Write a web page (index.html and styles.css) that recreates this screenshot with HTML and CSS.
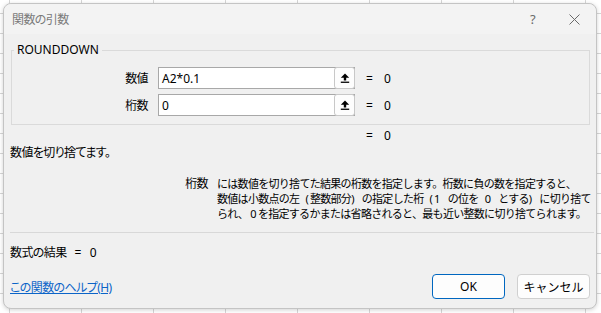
FILE: index.html
```html
<!DOCTYPE html>
<html lang="ja">
<head>
    <meta charset="UTF-8">
    <title>関数の引数</title>
    <link rel="stylesheet" href="styles.css">
</head>
<body>
    <div class="dialog">
        <div class="titlebar">
            <span class="title">関数の引数</span>
            <span class="help">?</span>
            <span class="close">
                <svg width="11" height="11" viewBox="0 0 11 11"><path d="M0.5 0.5 L10.5 10.5 M10.5 0.5 L0.5 10.5" stroke="#6a6a6a" stroke-width="1" fill="none"/></svg>
            </span>
        </div>

        <div class="content">
            <fieldset class="args">
                <legend>ROUNDDOWN</legend>
                <div class="arg-row">
                    <label>数値</label>
                    <div class="ref-box">
                        <span class="ref-value">A2*0.1</span>
                        <span class="ref-btn">
                            <svg width="10" height="10" viewBox="0 0 10 10"><path d="M5 0.5 L0.8 4.7 H3.8 V7.4 H6.2 V4.7 H9.2 Z" fill="#000"/><rect x="0.8" y="8.6" width="8.4" height="1.3" fill="#000"/></svg>
                        </span>
                    </div>
                    <span class="eq">=</span>
                    <span class="res">0</span>
                </div>
                <div class="arg-row">
                    <label>桁数</label>
                    <div class="ref-box">
                        <span class="ref-value">0</span>
                        <span class="ref-btn">
                            <svg width="10" height="10" viewBox="0 0 10 10"><path d="M5 0.5 L0.8 4.7 H3.8 V7.4 H6.2 V4.7 H9.2 Z" fill="#000"/><rect x="0.8" y="8.6" width="8.4" height="1.3" fill="#000"/></svg>
                        </span>
                    </div>
                    <span class="eq">=</span>
                    <span class="res">0</span>
                </div>
            </fieldset>

            <div class="total-row">
                <span class="eq">=</span>
                <span class="res">0</span>
            </div>

            <p class="summary">数値を切り捨てます。</p>

            <div class="arg-help">
                <span class="arg-name">桁数</span>
                <p class="arg-text">には数値を切り捨てた結果の桁数を指定します。桁数に負の数を指定すると、<br>数値は小数点の左<span class="lat"> (</span>整数部分<span class="lat">) </span>の指定した桁<span class="lat"> (1 </span>の位を<span class="lat"> 0 </span>とする<span class="lat">) </span>に切り捨て<br>られ、 0 を指定するかまたは省略されると、最も近い整数に切り捨てられます。</p>
            </div>

            <div class="sep"></div>

            <div class="formula-result">
                <span>数式の結果</span>
                <span class="f-eq">=</span>
                <span class="f-res">0</span>
            </div>

            <div class="footer">
                <a href="#" class="help-link">この関数のヘルプ(H)</a>
                <div class="buttons">
                    <button class="btn ok">OK</button>
                    <button class="btn">キャンセル</button>
                </div>
            </div>
        </div>
    </div>
</body>
</html>
```

FILE: styles.css
```css
body {
    margin: 0;
    width: 601px;
    height: 313px;
    overflow: hidden;
    font-family: "Noto Sans", "Noto Sans CJK JP", sans-serif;
    font-size: 12px;
    color: #000;
    background-color: #fff;
    background-image:
        repeating-linear-gradient(90deg, transparent 0 9px, #d6d6d6 9px 10px, transparent 10px 72px),
        repeating-linear-gradient(0deg, transparent 0 19px, #d6d6d6 19px 20px);
}

.dialog {
    margin: 3px 0 0 3px;
    width: 592px;
    height: 304px;
    background: #f0f0f0;
    border: 1px solid #c4c4c4;
    border-radius: 8px;
    box-shadow: 0 1px 4px rgba(0, 0, 0, 0.18);
    font-feature-settings: "palt";
    letter-spacing: -0.6px;
}

.titlebar {
    display: flex;
    align-items: center;
    height: 30px;
    padding: 0 16px 0 8px;
    background: #f3f3f3;
    border-radius: 8px 8px 0 0;
    color: #7a7a7a;
}

.title {
    flex: 1;
}

.help {
    font-size: 13px;
    margin-right: 34px;
    color: #6a6a6a;
}

.close {
    display: flex;
}

.content {
    padding: 8px 6px 0 6px;
}

.args {
    margin: 0 0 0 1px;
    padding: 9px 0 8px 0;
    border: 1px solid #dadada;
}

.args legend {
    margin-left: 2px;
    padding: 0 3px;
    line-height: 16px;
    letter-spacing: 0;
}

.arg-row {
    display: flex;
    align-items: center;
    height: 22px;
}

.arg-row + .arg-row {
    margin-top: 5px;
}

.arg-row label {
    width: 136px;
    text-align: right;
    margin-right: 10px;
}

.ref-box {
    position: relative;
    display: flex;
    align-items: center;
    width: 195px;
    height: 20px;
    background: #fff;
    border: 1px solid #a8a8a8;
}

.ref-value {
    flex: 1;
    padding-left: 3px;
    letter-spacing: 0;
}

.ref-btn {
    position: absolute;
    right: -1px;
    top: -1px;
    width: 19px;
    height: 20px;
    display: flex;
    align-items: center;
    justify-content: center;
    background: #fdfdfd;
    border: 1px solid #c8c8c8;
    border-radius: 3px;
}

.eq {
    margin-left: 11px;
    width: 18px;
}

.res {
    width: 20px;
}

.total-row {
    display: flex;
    height: 16px;
    margin-top: 2px;
    padding-left: 356px;
}

.total-row .eq {
    margin-left: 0;
}

.summary {
    margin: 2px 0 0 0;
    line-height: 16px;
}

.arg-help {
    display: flex;
    margin-top: 15px;
    line-height: 15px;
}

.arg-name {
    width: 198px;
    text-align: right;
    margin-right: 9px;
    flex-shrink: 0;
}

.arg-text {
    margin: 0;
    white-space: nowrap;
    font-size: 11px;
    font-feature-settings: normal;
    letter-spacing: -0.7px;
}

.arg-text .lat {
    letter-spacing: 1.2px;
    word-spacing: 2px;
}

.sep {
    margin: 11px -4px 0 0;
    border-top: 1px solid #d8d8d8;
}

.formula-result {
    display: flex;
    margin-top: 12px;
    line-height: 16px;
}

.f-eq {
    margin-left: 8px;
}

.f-res {
    margin-left: 9px;
}

.footer {
    display: flex;
    align-items: center;
    justify-content: space-between;
    margin-top: 13px;
}

.help-link {
    color: #0b64c8;
    text-decoration: underline;
}

.buttons {
    display: flex;
    gap: 12px;
}

.btn {
    width: 73px;
    height: 25px;
    font-family: inherit;
    font-size: 12px;
    letter-spacing: 0;
    color: #000;
    background: #fdfdfd;
    border: 1px solid #d0d0d0;
    border-radius: 4px;
    padding: 0;
}

.btn.ok {
    border-color: #0067c0;
}
```
